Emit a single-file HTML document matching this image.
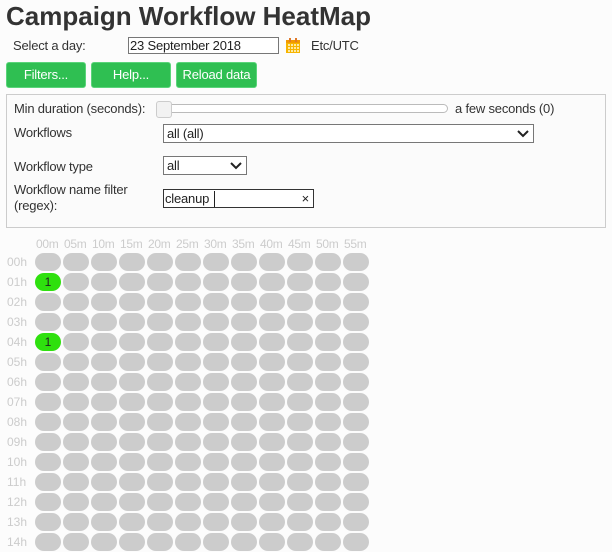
<!DOCTYPE html>
<html><head><meta charset="utf-8"><style>
*{margin:0;padding:0;box-sizing:border-box}
body{width:612px;height:552px;overflow:hidden;background:#fcfcfc;font-family:"Liberation Sans",Arial,sans-serif;color:#333;position:relative}
.a{position:absolute;white-space:nowrap}
h1{position:absolute;left:6px;top:1px;font-size:26px;font-weight:bold;color:#333;letter-spacing:0}
.btn{position:absolute;top:62px;height:26px;background:#2fbf52;border:1px solid #5ad47a;border-radius:3px;color:#fff;font-size:13px;text-align:center;line-height:24px;letter-spacing:-0.2px}
.t{font-size:13px;color:#333;letter-spacing:-0.2px}
.panel{position:absolute;left:6px;top:94px;width:600px;height:134px;border:1px solid #ccc;background:#fbfbfb}
.box{position:absolute;border:1px solid #777;background:#fff;font-size:13px;line-height:17px;padding-left:3px;color:#222;letter-spacing:-0.2px}
.chev{position:absolute;right:4px;top:3px}
.hdr{position:absolute;top:237px;font-size:12px;color:#ccc;letter-spacing:-0.3px}
.row{position:absolute;left:0;height:18px}
.lbl{position:absolute;left:7px;font-size:12px;color:#ccc;top:2px}
.c{position:absolute;top:0;width:26px;height:18px;border-radius:9px;background:#ccc;font-size:12px;text-align:center;line-height:18px;color:#222}
.g{background:#2ee00e}
</style></head><body>
<h1>Campaign Workflow HeatMap</h1>
<div class="a t" style="left:13px;top:38px">Select a day:</div>
<div class="box" style="left:128px;top:37px;width:151px;height:17px;line-height:15px;padding-left:1px">23 September 2018</div>
<svg class="a" style="left:285px;top:37px" width="16" height="17" viewBox="0 0 16 17"><rect x="1" y="3" width="14" height="13" fill="#f7b500"/><rect x="1" y="3" width="14" height="3" fill="#f29a00"/><rect x="4" y="1" width="2" height="4" fill="#e07a2a"/><rect x="10" y="1" width="2" height="4" fill="#e07a2a"/><g fill="#fde9a6"><rect x="3" y="7" width="2" height="2"/><rect x="6" y="7" width="2" height="2"/><rect x="9" y="7" width="2" height="2"/><rect x="12" y="7" width="2" height="2"/><rect x="3" y="10" width="2" height="2"/><rect x="6" y="10" width="2" height="2"/><rect x="9" y="10" width="2" height="2"/><rect x="12" y="10" width="2" height="2"/><rect x="3" y="13" width="2" height="2"/><rect x="6" y="13" width="2" height="2"/><rect x="9" y="13" width="2" height="2"/><rect x="12" y="13" width="2" height="2"/></g></svg>
<div class="a t" style="left:311px;top:38px">Etc/UTC</div>
<div class="btn" style="left:6px;width:80px">Filters...</div>
<div class="btn" style="left:91px;width:80px">Help...</div>
<div class="btn" style="left:176px;width:81px">Reload data</div>
<div class="panel"></div>
<div class="a t" style="left:14px;top:101px">Min duration (seconds):</div>
<div class="a" style="left:163px;top:104px;width:285px;height:9px;border:1px solid #bbb;border-radius:5px;background:#fff"></div>
<div class="a" style="left:156px;top:101px;width:16px;height:17px;border:1px solid #ccc;border-radius:3px;background:#f2f2f2"></div>
<div class="a t" style="left:455px;top:101px">a few seconds (0)</div>
<div class="a t" style="left:14px;top:125px">Workflows</div>
<div class="box" style="left:163px;top:124px;width:371px;height:19px">all (all)<svg class="chev" width="12" height="10" viewBox="0 0 12 10"><path d="M1 3l5 5 5-5" stroke="#222" stroke-width="2" fill="none"/></svg></div>
<div class="a t" style="left:14px;top:159px">Workflow type</div>
<div class="box" style="left:163px;top:156px;width:84px;height:19px">all<svg class="chev" width="12" height="10" viewBox="0 0 12 10"><path d="M1 3l5 5 5-5" stroke="#222" stroke-width="2" fill="none"/></svg></div>
<div class="a t" style="left:14px;top:182px;line-height:16px">Workflow name filter<br>(regex):</div>
<div class="box" style="left:163px;top:189px;width:151px;height:19px;border-color:#333;padding-left:1px">cleanup<span style="position:absolute;left:50px;top:1px;width:1px;height:16px;background:#222"></span><span style="position:absolute;right:4px;top:0;font-size:13px">×</span></div>
<div class="hdr" style="left:36px">00m</div><div class="hdr" style="left:64px">05m</div><div class="hdr" style="left:92px">10m</div><div class="hdr" style="left:120px">15m</div><div class="hdr" style="left:148px">20m</div><div class="hdr" style="left:176px">25m</div><div class="hdr" style="left:204px">30m</div><div class="hdr" style="left:232px">35m</div><div class="hdr" style="left:260px">40m</div><div class="hdr" style="left:288px">45m</div><div class="hdr" style="left:316px">50m</div><div class="hdr" style="left:344px">55m</div>
<div class="row" style="top:253px"><span class="lbl">00h</span><div class="c" style="left:35px"></div><div class="c" style="left:63px"></div><div class="c" style="left:91px"></div><div class="c" style="left:119px"></div><div class="c" style="left:147px"></div><div class="c" style="left:175px"></div><div class="c" style="left:203px"></div><div class="c" style="left:231px"></div><div class="c" style="left:259px"></div><div class="c" style="left:287px"></div><div class="c" style="left:315px"></div><div class="c" style="left:343px"></div></div>
<div class="row" style="top:273px"><span class="lbl">01h</span><div class="c g" style="left:35px">1</div><div class="c" style="left:63px"></div><div class="c" style="left:91px"></div><div class="c" style="left:119px"></div><div class="c" style="left:147px"></div><div class="c" style="left:175px"></div><div class="c" style="left:203px"></div><div class="c" style="left:231px"></div><div class="c" style="left:259px"></div><div class="c" style="left:287px"></div><div class="c" style="left:315px"></div><div class="c" style="left:343px"></div></div>
<div class="row" style="top:293px"><span class="lbl">02h</span><div class="c" style="left:35px"></div><div class="c" style="left:63px"></div><div class="c" style="left:91px"></div><div class="c" style="left:119px"></div><div class="c" style="left:147px"></div><div class="c" style="left:175px"></div><div class="c" style="left:203px"></div><div class="c" style="left:231px"></div><div class="c" style="left:259px"></div><div class="c" style="left:287px"></div><div class="c" style="left:315px"></div><div class="c" style="left:343px"></div></div>
<div class="row" style="top:313px"><span class="lbl">03h</span><div class="c" style="left:35px"></div><div class="c" style="left:63px"></div><div class="c" style="left:91px"></div><div class="c" style="left:119px"></div><div class="c" style="left:147px"></div><div class="c" style="left:175px"></div><div class="c" style="left:203px"></div><div class="c" style="left:231px"></div><div class="c" style="left:259px"></div><div class="c" style="left:287px"></div><div class="c" style="left:315px"></div><div class="c" style="left:343px"></div></div>
<div class="row" style="top:333px"><span class="lbl">04h</span><div class="c g" style="left:35px">1</div><div class="c" style="left:63px"></div><div class="c" style="left:91px"></div><div class="c" style="left:119px"></div><div class="c" style="left:147px"></div><div class="c" style="left:175px"></div><div class="c" style="left:203px"></div><div class="c" style="left:231px"></div><div class="c" style="left:259px"></div><div class="c" style="left:287px"></div><div class="c" style="left:315px"></div><div class="c" style="left:343px"></div></div>
<div class="row" style="top:353px"><span class="lbl">05h</span><div class="c" style="left:35px"></div><div class="c" style="left:63px"></div><div class="c" style="left:91px"></div><div class="c" style="left:119px"></div><div class="c" style="left:147px"></div><div class="c" style="left:175px"></div><div class="c" style="left:203px"></div><div class="c" style="left:231px"></div><div class="c" style="left:259px"></div><div class="c" style="left:287px"></div><div class="c" style="left:315px"></div><div class="c" style="left:343px"></div></div>
<div class="row" style="top:373px"><span class="lbl">06h</span><div class="c" style="left:35px"></div><div class="c" style="left:63px"></div><div class="c" style="left:91px"></div><div class="c" style="left:119px"></div><div class="c" style="left:147px"></div><div class="c" style="left:175px"></div><div class="c" style="left:203px"></div><div class="c" style="left:231px"></div><div class="c" style="left:259px"></div><div class="c" style="left:287px"></div><div class="c" style="left:315px"></div><div class="c" style="left:343px"></div></div>
<div class="row" style="top:393px"><span class="lbl">07h</span><div class="c" style="left:35px"></div><div class="c" style="left:63px"></div><div class="c" style="left:91px"></div><div class="c" style="left:119px"></div><div class="c" style="left:147px"></div><div class="c" style="left:175px"></div><div class="c" style="left:203px"></div><div class="c" style="left:231px"></div><div class="c" style="left:259px"></div><div class="c" style="left:287px"></div><div class="c" style="left:315px"></div><div class="c" style="left:343px"></div></div>
<div class="row" style="top:413px"><span class="lbl">08h</span><div class="c" style="left:35px"></div><div class="c" style="left:63px"></div><div class="c" style="left:91px"></div><div class="c" style="left:119px"></div><div class="c" style="left:147px"></div><div class="c" style="left:175px"></div><div class="c" style="left:203px"></div><div class="c" style="left:231px"></div><div class="c" style="left:259px"></div><div class="c" style="left:287px"></div><div class="c" style="left:315px"></div><div class="c" style="left:343px"></div></div>
<div class="row" style="top:433px"><span class="lbl">09h</span><div class="c" style="left:35px"></div><div class="c" style="left:63px"></div><div class="c" style="left:91px"></div><div class="c" style="left:119px"></div><div class="c" style="left:147px"></div><div class="c" style="left:175px"></div><div class="c" style="left:203px"></div><div class="c" style="left:231px"></div><div class="c" style="left:259px"></div><div class="c" style="left:287px"></div><div class="c" style="left:315px"></div><div class="c" style="left:343px"></div></div>
<div class="row" style="top:453px"><span class="lbl">10h</span><div class="c" style="left:35px"></div><div class="c" style="left:63px"></div><div class="c" style="left:91px"></div><div class="c" style="left:119px"></div><div class="c" style="left:147px"></div><div class="c" style="left:175px"></div><div class="c" style="left:203px"></div><div class="c" style="left:231px"></div><div class="c" style="left:259px"></div><div class="c" style="left:287px"></div><div class="c" style="left:315px"></div><div class="c" style="left:343px"></div></div>
<div class="row" style="top:473px"><span class="lbl">11h</span><div class="c" style="left:35px"></div><div class="c" style="left:63px"></div><div class="c" style="left:91px"></div><div class="c" style="left:119px"></div><div class="c" style="left:147px"></div><div class="c" style="left:175px"></div><div class="c" style="left:203px"></div><div class="c" style="left:231px"></div><div class="c" style="left:259px"></div><div class="c" style="left:287px"></div><div class="c" style="left:315px"></div><div class="c" style="left:343px"></div></div>
<div class="row" style="top:493px"><span class="lbl">12h</span><div class="c" style="left:35px"></div><div class="c" style="left:63px"></div><div class="c" style="left:91px"></div><div class="c" style="left:119px"></div><div class="c" style="left:147px"></div><div class="c" style="left:175px"></div><div class="c" style="left:203px"></div><div class="c" style="left:231px"></div><div class="c" style="left:259px"></div><div class="c" style="left:287px"></div><div class="c" style="left:315px"></div><div class="c" style="left:343px"></div></div>
<div class="row" style="top:513px"><span class="lbl">13h</span><div class="c" style="left:35px"></div><div class="c" style="left:63px"></div><div class="c" style="left:91px"></div><div class="c" style="left:119px"></div><div class="c" style="left:147px"></div><div class="c" style="left:175px"></div><div class="c" style="left:203px"></div><div class="c" style="left:231px"></div><div class="c" style="left:259px"></div><div class="c" style="left:287px"></div><div class="c" style="left:315px"></div><div class="c" style="left:343px"></div></div>
<div class="row" style="top:533px"><span class="lbl">14h</span><div class="c" style="left:35px"></div><div class="c" style="left:63px"></div><div class="c" style="left:91px"></div><div class="c" style="left:119px"></div><div class="c" style="left:147px"></div><div class="c" style="left:175px"></div><div class="c" style="left:203px"></div><div class="c" style="left:231px"></div><div class="c" style="left:259px"></div><div class="c" style="left:287px"></div><div class="c" style="left:315px"></div><div class="c" style="left:343px"></div></div>
</body></html>
